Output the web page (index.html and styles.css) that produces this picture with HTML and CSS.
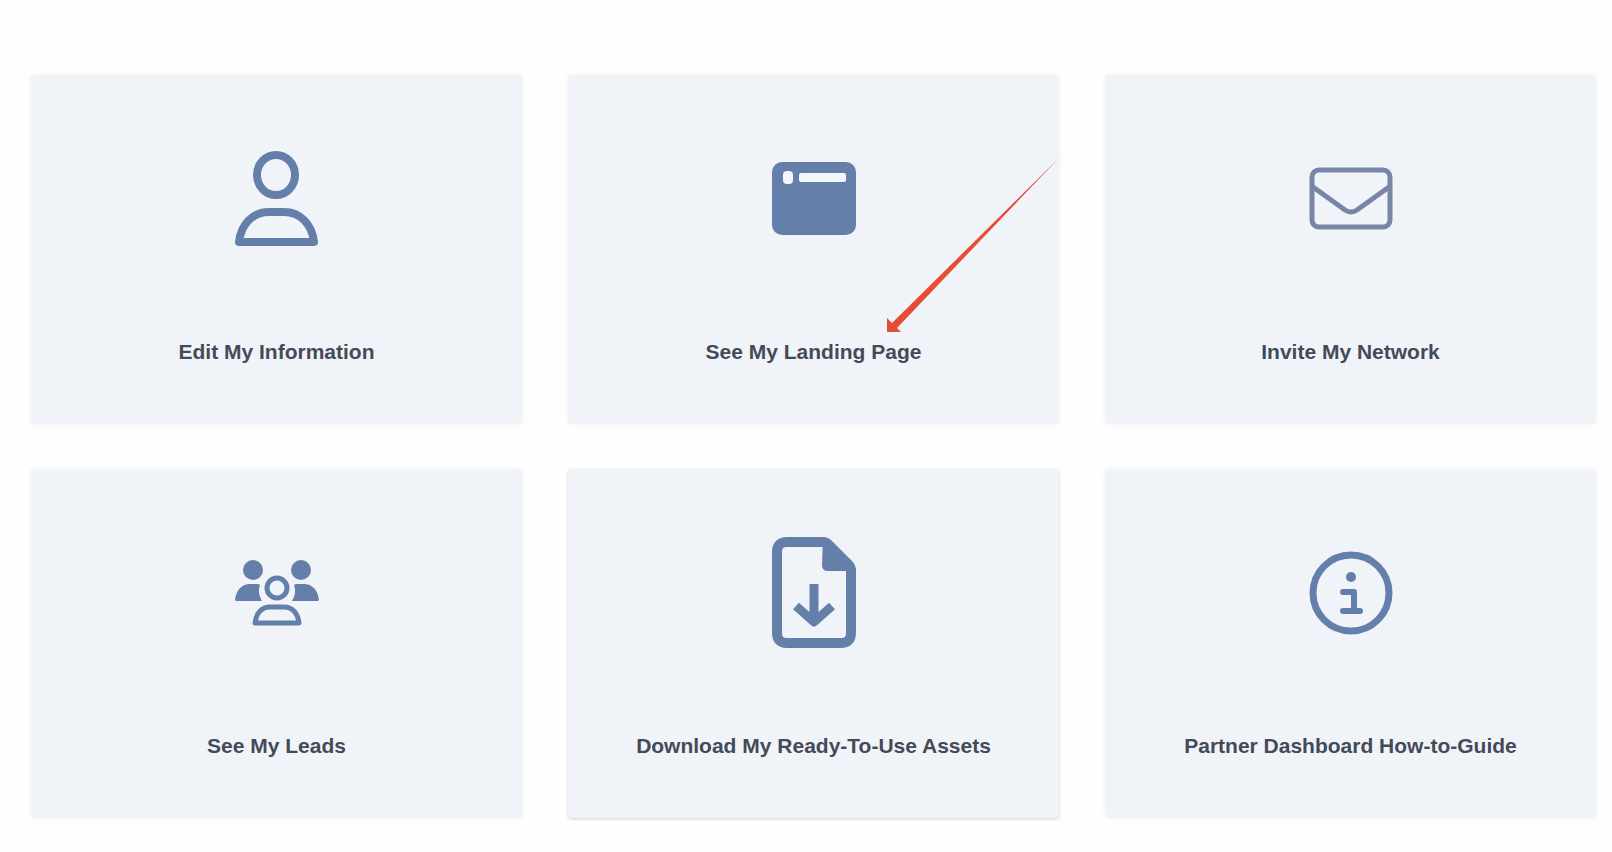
FILE: index.html
```html
<!DOCTYPE html>
<html lang="en">
<head>
    <meta charset="UTF-8">
    <meta name="viewport" content="width=device-width, initial-scale=1.0">
    <title>Partner Dashboard</title>
    <link rel="stylesheet" href="styles.css">
</head>
<body>

    <main class="dashboard">
        <a href="#" class="card">
            <span class="card-icon">
                <svg width="84" height="96" viewBox="0 0 84 96" fill="none" stroke="currentColor" stroke-width="8">
                    <ellipse cx="41" cy="24" rx="19" ry="20"/>
                    <path d="M4 91C6 73 18 61 34 61H49C65 61 77 73 79 91Z" stroke-linejoin="round"/>
                </svg>
            </span>
            <span class="card-label">Edit My Information</span>
        </a>

        <a href="#" class="card">
            <span class="card-icon">
                <svg width="84" height="74" viewBox="0 0 84 74">
                    <rect x="0" y="0" width="84" height="73" rx="10" fill="currentColor"/>
                    <rect x="11" y="9" width="10" height="13" rx="4" fill="#f1f7fc"/>
                    <rect x="27" y="11" width="47" height="9" rx="2" fill="#f1f7fc"/>
                </svg>
            </span>
            <span class="card-label">See My Landing Page</span>
            <!-- Pointer over the landing page card -->
            <svg class="pointer" width="172" height="174" viewBox="0 0 172 174">
                <path d="M172 0L10 170L14 174H0V160L5 165Z" fill="#e74c36"/>
            </svg>
        </a>

        <a href="#" class="card">
            <span class="card-icon">
                <svg class="light" width="84" height="64" viewBox="0 0 84 64" fill="none" stroke="currentColor" stroke-width="5">
                    <rect x="3" y="3" width="78" height="57" rx="7"/>
                    <path d="M4 20L36 43Q42 47 48 43L80 20"/>
                </svg>
            </span>
            <span class="card-label">Invite My Network</span>
        </a>

        <a href="#" class="card">
            <span class="card-icon">
                <svg width="84" height="68" viewBox="0 0 84 68">
                    <g fill="currentColor">
                        <circle cx="18" cy="11" r="10"/>
                        <circle cx="66" cy="11" r="10"/>
                        <path d="M0 41C1 31 7 25 15 25H22Q24 25 25 26C23 32 24 37 27 42H2Q0 42 0 41Z"/>
                        <path d="M84 41C83 31 77 25 69 25H62Q60 25 59 26C61 32 60 37 57 42H82Q84 42 84 41Z"/>
                    </g>
                    <g fill="none" stroke="currentColor" stroke-width="5">
                        <circle cx="42" cy="29" r="10"/>
                        <path d="M20 64C21 54 27 48 35 48H49C57 48 63 54 64 64Z" stroke-linejoin="round"/>
                    </g>
                </svg>
            </span>
            <span class="card-label">See My Leads</span>
        </a>

        <a href="#" class="card raised">
            <span class="card-icon">
                <svg width="84" height="112" viewBox="0 0 84 112">
                    <path d="M51 5H15Q5 5 5 15V96Q5 106 15 106H69Q79 106 79 96V31" fill="none" stroke="currentColor" stroke-width="10"/>
                    <path d="M51 0Q56 0 60 4L80 24Q84 28 84 34H56Q50 34 50 28Z" fill="currentColor"/>
                    <path d="M42 47V84M24 69L42 85L60 69" fill="none" stroke="currentColor" stroke-width="9" stroke-linejoin="round"/>
                </svg>
            </span>
            <span class="card-label">Download My Ready-To-Use Assets</span>
        </a>

        <a href="#" class="card">
            <span class="card-icon">
                <svg width="84" height="84" viewBox="0 0 84 84">
                    <circle cx="42" cy="42" r="38" fill="none" stroke="currentColor" stroke-width="7"/>
                    <circle cx="42" cy="26" r="5" fill="currentColor"/>
                    <path d="M34 41H45V60M34 60H51" fill="none" stroke="currentColor" stroke-width="6" stroke-linecap="round" stroke-linejoin="round"/>
                </svg>
            </span>
            <span class="card-label">Partner Dashboard How-to-Guide</span>
        </a>
    </main>

</body>
</html>
```
FILE: styles.css
```css
* {
    box-sizing: border-box;
    margin: 0;
    padding: 0;
}

body {
    font-family: "Liberation Sans", Arial, sans-serif;
    background: #fefefe;
}

.dashboard {
    display: grid;
    grid-template-columns: repeat(3, 1fr);
    gap: 45px 46px;
    padding: 75px 16px 32px 31px;
}

/* Cards */
.card {
    position: relative;
    display: flex;
    flex-direction: column;
    align-items: center;
    padding: 68px 20px 58px;
    border-radius: 4px;
    background: #f0f4f9;
    box-shadow: 0 0 4px rgba(60, 70, 90, 0.08);
    color: #444a58;
    text-decoration: none;
}

.card:hover {
    background: #e9eff7;
}

.card.raised {
    box-shadow: 0 1px 3px rgba(60, 70, 90, 0.25);
}

.card-icon {
    display: flex;
    align-items: center;
    height: 112px;
    color: #657fab;
}

.card-icon .light {
    color: #7985a8;
}

.card-label {
    margin-top: 83px;
    font-size: 21px;
    font-weight: bold;
    line-height: 28px;
    text-align: center;
}

/* Red arrow */
.pointer {
    position: absolute;
    top: 83px;
    right: 0;
}
```
